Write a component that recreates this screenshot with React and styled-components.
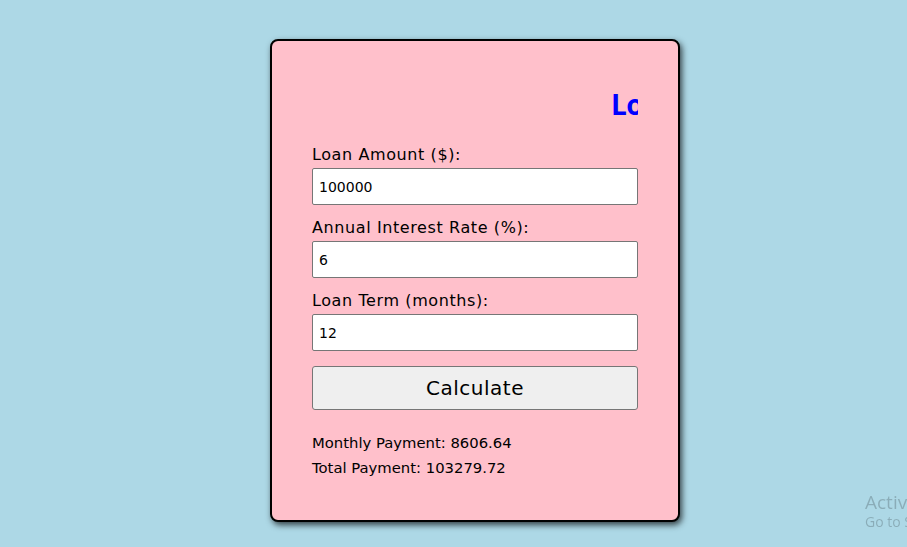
import React, { useState } from 'react';
import styled, { createGlobalStyle } from 'styled-components';

const GlobalStyle = createGlobalStyle`
  html, body {
    margin: 0;
    padding: 0;
    background: #add8e6;
    font-family: "DejaVu Sans", "Open Sans", sans-serif;
  }
`;

const Page = styled.div`
  min-height: 547px;
  padding: 39px 0 0 270px;
  box-sizing: border-box;
`;

const Card = styled.div`
  width: 410px;
  height: 483px;
  box-sizing: border-box;
  background: #ffc0cb;
  border: 2px solid #000;
  border-radius: 8px;
  box-shadow: 2px 3px 6px rgba(0, 0, 0, 0.7);
  padding: 44px 40px 0;
`;

const Title = styled.h1`
  margin: 0 0 20px;
  overflow: hidden;
  white-space: nowrap;
  padding-left: 299px;
  font-family: "Open Sans", sans-serif;
  font-size: 28px;
  line-height: 38px;
  font-weight: 700;
  color: #0000ff;
  letter-spacing: -0.5px;
`;

const Field = styled.div`
  display: flex;
  flex-direction: column;
  margin-bottom: 11px;
`;

const Label = styled.label`
  font-size: 16px;
  line-height: 24px;
  letter-spacing: 0.6px;
  color: #000;
  margin-bottom: 1px;
`;

const Input = styled.input`
  height: 37px;
  box-sizing: border-box;
  border: 1px solid #767676;
  border-radius: 2px;
  background: #fff;
  padding: 0 6px;
  font-family: inherit;
  font-size: 14px;
  color: #000;
  outline: none;
`;

const Button = styled.button`
  width: 100%;
  height: 44px;
  margin-top: 4px;
  border: 1px solid #767676;
  border-radius: 3px;
  background: #efefef;
  font-family: inherit;
  font-size: 20px;
  letter-spacing: 0.5px;
  color: #000;
`;

const Results = styled.div`
  margin-top: 20px;
  font-size: 14.8px;
  line-height: 25px;
  color: #000;
`;

const Watermark = styled.div`
  position: fixed;
  left: 865px;
  top: 491px;
  width: 42px;
  overflow: hidden;
  color: rgba(0, 0, 0, 0.2);
  font-family: "Open Sans", sans-serif;
  white-space: nowrap;
  line-height: 1.2;
`;

const WmTitle = styled.div`
  font-size: 19px;
`;

const WmSub = styled.div`
  font-size: 14px;
`;

const fields = [
  { id: 'amount', label: 'Loan Amount ($):', value: '100000' },
  { id: 'rate', label: 'Annual Interest Rate (%):', value: '6' },
  { id: 'term', label: 'Loan Term (months):', value: '12' },
];

export default function App() {
  const [values, setValues] = useState(
    Object.fromEntries(fields.map(f => [f.id, f.value]))
  );

  return (
    <Page>
      <GlobalStyle />
      <Card>
        <Title>Loan Calculator</Title>
        {fields.map(f => (
          <Field key={f.id}>
            <Label htmlFor={f.id}>{f.label}</Label>
            <Input
              id={f.id}
              type="text"
              value={values[f.id]}
              onChange={e => setValues({ ...values, [f.id]: e.target.value })}
            />
          </Field>
        ))}
        <Button>Calculate</Button>
        <Results>
          <div>Monthly Payment: 8606.64</div>
          <div>Total Payment: 103279.72</div>
        </Results>
      </Card>
      <Watermark>
        <WmTitle>Activate Windows</WmTitle>
        <WmSub>Go to Settings to activate Windows.</WmSub>
      </Watermark>
    </Page>
  );
}
